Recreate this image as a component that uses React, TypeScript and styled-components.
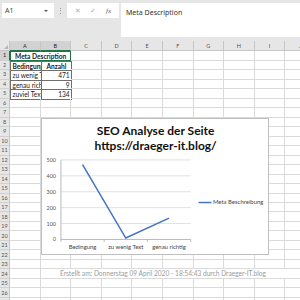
import React from 'react'
import styled, { createGlobalStyle } from 'styled-components'

const GlobalStyle = createGlobalStyle`
  html, body {
    margin: 0;
    padding: 0;
    background: #ffffff;
    overflow: hidden;
  }
  * {
    box-sizing: border-box;
  }
`

const COL_W = 30.6
const ROW_H = 9.49
const COLS = ['A', 'B', 'C', 'D', 'E', 'F', 'G', 'H', 'I', 'J']
const ROWS = Array.from({ length: 27 }, (_, i) => i + 1)

type CellDef = {
  text: string
  bold?: boolean
  align?: 'left' | 'center' | 'right'
  span?: number
  boxed?: boolean
  selected?: boolean
  muted?: boolean
}

const cells: Record<string, CellDef> = {
  A1: { text: 'Meta Description', bold: true, align: 'center', span: 2, selected: true },
  A2: { text: 'Bedingung', bold: true, boxed: true },
  B2: { text: 'Anzahl', bold: true, align: 'center', boxed: true },
  A3: { text: 'zu wenig Text', boxed: true },
  B3: { text: '471', align: 'right', boxed: true },
  A4: { text: 'genau richtig', boxed: true },
  B4: { text: '9', align: 'right', boxed: true },
  A5: { text: 'zuviel Text', boxed: true },
  B5: { text: '134', align: 'right', boxed: true },
  B24: {
    text: 'Erstellt am: Donnerstag 09 April 2020 - 18:54:43 durch Draeger-IT.blog',
    align: 'center',
    span: 8,
    muted: true,
  },
}

const data = [
  { label: 'Bedingung', value: 471 },
  { label: 'zu wenig Text', value: 9 },
  { label: 'genau richtig', value: 134 },
]

const Page = styled.div`
  width: 300px;
  height: 300px;
  overflow: hidden;
  background: #e6e6e6;
  font-family: 'Noto Sans', 'Liberation Sans', sans-serif;
  display: flex;
  flex-direction: column;
`

const FormulaBar = styled.div`
  flex-shrink: 0;
  height: 41px;
  display: flex;
  align-items: flex-start;
  gap: 2px;
  padding: 3px 0 0 2px;
`

const NameBox = styled.div`
  width: 52px;
  height: 15px;
  background: #ffffff;
  display: flex;
  align-items: center;
  justify-content: space-between;
  padding: 0 6px 0 3px;
  font-size: 7px;
  color: #444;
`

const Caret = styled.span`
  width: 0;
  height: 0;
  border-left: 2px solid transparent;
  border-right: 2px solid transparent;
  border-top: 2.5px solid #555;
`

const Dots = styled.div`
  width: 9px;
  height: 15px;
  display: flex;
  flex-direction: column;
  align-items: center;
  justify-content: center;
  gap: 1.5px;
  span {
    width: 1px;
    height: 1px;
    background: #9a9a9a;
  }
`

const FxBox = styled.div`
  width: 52px;
  height: 15px;
  background: #ffffff;
  display: flex;
  align-items: center;
  justify-content: space-around;
  padding: 0 3px;
  color: #b0b0b0;
  font-size: 7px;
`

const FxLabel = styled.span`
  font-family: 'Liberation Serif', serif;
  font-style: italic;
  color: #666;
  font-size: 7px;
`

const FormulaInput = styled.div`
  flex: 1;
  height: 34px;
  background: #ffffff;
  padding: 5px 0 0 5px;
  font-size: 7px;
  color: #333;
`

const Sheet = styled.div`
  position: relative;
  flex: 1;
  min-height: 0;
  overflow: hidden;
  display: grid;
  grid-template-columns: 10px repeat(${COLS.length}, ${COL_W}px);
  grid-template-rows: 10.25px;
  grid-auto-rows: ${ROW_H}px;
  align-content: start;
  background: #ffffff;
  font-family: Lato, 'Liberation Sans', sans-serif;
`

const Corner = styled.div`
  background: #e6e6e6;
  border-right: 1px solid #c6c6c6;
  border-bottom: 1px solid #c6c6c6;
  position: relative;
  &::after {
    content: '';
    position: absolute;
    right: 1px;
    bottom: 1px;
    border-left: 4px solid transparent;
    border-bottom: 4px solid #b4b4b4;
  }
`

const ColHead = styled.div<{ $active?: boolean }>`
  background: ${(p) => (p.$active ? '#d2d2d2' : '#e6e6e6')};
  border-right: 1px solid #c6c6c6;
  border-bottom: 1px solid ${(p) => (p.$active ? '#217346' : '#c6c6c6')};
  font-size: 5.5px;
  color: ${(p) => (p.$active ? '#262626' : '#555')};
  display: flex;
  align-items: center;
  justify-content: center;
`

const RowHead = styled.div<{ $active?: boolean }>`
  background: ${(p) => (p.$active ? '#d2d2d2' : '#e6e6e6')};
  border-right: 1px solid ${(p) => (p.$active ? '#217346' : '#c6c6c6')};
  border-bottom: 1px solid #d0d0d0;
  font-size: 5.5px;
  color: ${(p) => (p.$active ? '#262626' : '#555')};
  display: flex;
  align-items: center;
  justify-content: center;
`

const Cell = styled.div<{
  $span: number
  $align: string
  $bold?: boolean
  $boxed?: boolean
  $selected?: boolean
  $muted?: boolean
}>`
  grid-column: span ${(p) => p.$span};
  position: relative;
  border-right: 1px solid #dadada;
  border-bottom: 1px solid #dadada;
  ${(p) =>
    p.$boxed &&
    `
    border: 1px solid #6e6e6e;
    margin: 0 -1px -1px 0;
  `}
  ${(p) =>
    p.$selected &&
    `
    border: 1.5px solid #217346;
  `}
  ${(p) => p.$muted && `border-right: none;`}
  font-size: 6.6px;
  line-height: 1;
  font-weight: ${(p) => (p.$bold ? 700 : 400)};
  color: ${(p) => (p.$muted ? '#9b9b9b' : '#222')};
  text-align: ${(p) => p.$align};
  white-space: nowrap;
  overflow: hidden;
  padding: 1px 1.5px 0;
`

const Handle = styled.span`
  position: absolute;
  right: -2px;
  bottom: -2px;
  width: 3px;
  height: 3px;
  background: #217346;
  border: 0.5px solid #ffffff;
`

const ChartBox = styled.div`
  position: absolute;
  left: ${10 + COL_W}px;
  top: 77px;
  width: 228px;
  height: 137px;
  background: #ffffff;
  border: 1px solid #bfbfbf;
  display: flex;
  flex-direction: column;
  align-items: center;
  padding-top: 4px;
`

const ChartTitle = styled.div`
  font-family: Lato, 'Liberation Sans', sans-serif;
  font-weight: 700;
  font-size: 12px;
  line-height: 15px;
  color: #111;
  text-align: center;
  margin-left: 2px;
`

const Plot = styled.svg`
  display: block;
  font-family: Lato, 'Liberation Sans', sans-serif;
`

const Chart: React.FC = () => {
  const x0 = 18
  const x1 = 149
  const yTop = 7
  const yBottom = 87.3
  const step = (x1 - x0) / data.length
  const scale = (yBottom - yTop) / 500
  const points = data
    .map((d, i) => `${x0 + step * (i + 0.5)},${yBottom - d.value * scale}`)
    .join(' ')

  return (
    <ChartBox>
      <ChartTitle>
        SEO Analyse der Seite
        <br />
        https://draeger-it.blog/
      </ChartTitle>
      <Plot width={226} height={102} viewBox="0 0 226 102">
        {[0, 100, 200, 300, 400, 500].map((v) => {
          const y = yBottom - v * scale
          return (
            <g key={v}>
              <line
                x1={x0}
                x2={x1}
                y1={y}
                y2={y}
                stroke={v === 0 ? '#a6a6a6' : '#d9d9d9'}
                strokeWidth={0.8}
              />
              <text x={x0 - 5} y={y + 2} fontSize={5.5} fill="#555" textAnchor="end">
                {v}
              </text>
            </g>
          )
        })}
        <line x1={x0} x2={x0} y1={yTop} y2={yBottom} stroke="#a6a6a6" strokeWidth={0.8} />
        {[0, 1, 2, 3].map((i) => (
          <line
            key={i}
            x1={x0 + step * i}
            x2={x0 + step * i}
            y1={yBottom}
            y2={yBottom + 2.5}
            stroke="#a6a6a6"
            strokeWidth={0.8}
          />
        ))}
        {data.map((d, i) => (
          <text
            key={d.label}
            x={x0 + step * (i + 0.5)}
            y={yBottom + 10}
            fontSize={6}
            fill="#444"
            textAnchor="middle"
          >
            {d.label}
          </text>
        ))}
        <polyline points={points} fill="none" stroke="#4472c4" strokeWidth={1.5} />
        <line x1={157} x2={170} y1={50} y2={50} stroke="#4472c4" strokeWidth={1.5} />
        <text x={171.5} y={52} fontSize={6} fill="#444">
          Meta Beschreibung
        </text>
      </Plot>
    </ChartBox>
  )
}

const App: React.FC = () => {
  const covered = new Set<string>(['B1', 'C24', 'D24', 'E24', 'F24', 'G24', 'H24', 'I24'])

  return (
    <Page>
      <GlobalStyle />
      <FormulaBar>
        <NameBox>
          A1
          <Caret />
        </NameBox>
        <Dots>
          <span />
          <span />
          <span />
        </Dots>
        <FxBox>
          <span>✕</span>
          <span>✓</span>
          <FxLabel>fx</FxLabel>
        </FxBox>
        <FormulaInput>Meta Description</FormulaInput>
      </FormulaBar>
      <Sheet>
        <Corner />
        {COLS.map((c) => (
          <ColHead key={c} $active={c === 'A' || c === 'B'}>
            {c}
          </ColHead>
        ))}
        {ROWS.map((r) => (
          <React.Fragment key={r}>
            <RowHead $active={r === 1}>{r}</RowHead>
            {COLS.map((c) => {
              const id = `${c}${r}`
              if (covered.has(id)) return null
              const def = cells[id]
              return (
                <Cell
                  key={id}
                  $span={def?.span ?? 1}
                  $align={def?.align ?? 'left'}
                  $bold={def?.bold}
                  $boxed={def?.boxed}
                  $selected={def?.selected}
                  $muted={def?.muted}
                >
                  {def?.text}
                  {def?.selected && <Handle />}
                </Cell>
              )
            })}
          </React.Fragment>
        ))}
        <Chart />
      </Sheet>
    </Page>
  )
}

export default App
